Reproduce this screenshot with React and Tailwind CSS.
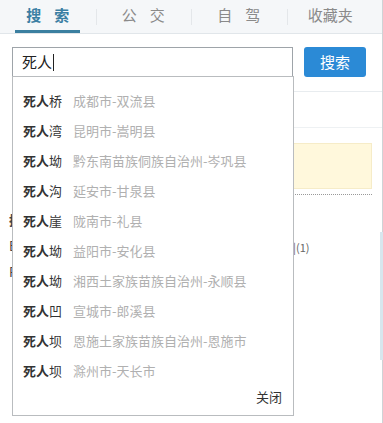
import { useState } from 'react'

const tabs = ['搜索', '公交', '自驾', '收藏夹']

const suggestions = [
  ['死人桥', '成都市-双流县'],
  ['死人湾', '昆明市-嵩明县'],
  ['死人坳', '黔东南苗族侗族自治州-岑巩县'],
  ['死人沟', '延安市-甘泉县'],
  ['死人崖', '陇南市-礼县'],
  ['死人坳', '益阳市-安化县'],
  ['死人坳', '湘西土家族苗族自治州-永顺县'],
  ['死人凹', '宣城市-郎溪县'],
  ['死人坝', '恩施土家族苗族自治州-恩施市'],
  ['死人坝', '滁州市-天长市'],
]

const query = '死人'

export default function App() {
  const [active] = useState(0)

  return (
    <div
      className="relative w-[383px] h-[423px] overflow-hidden bg-white"
      style={{ fontFamily: '"Noto Sans CJK SC", "Noto Sans", sans-serif' }}
    >
      <div className="border-r border-[#cfd3d6] h-full">
        {/* tab bar */}
        <div className="flex h-[34px] bg-[#f5f7f9] border-b border-[#e1e6ea]">
          {tabs.map((t, i) => (
            <div key={t} className="relative flex-1 flex items-center justify-center">
              {i > 0 && <span className="absolute left-0 top-[9px] h-[16px] w-px bg-[#e4e7ea]" />}
              {i === 3 ? (
                <span className="text-[15px] text-[#8a8a8a] -mt-[2px] -ml-[8px]">{t}</span>
              ) : (
                <span
                  className={
                    i === active
                      ? 'text-[15px] font-bold text-[#3b7fa3] tracking-[13px] -mr-[13px] -mt-[2px]'
                      : 'text-[15px] text-[#8a8a8a] tracking-[13px] -mr-[13px] -mt-[2px]'
                  }
                >
                  {t}
                </span>
              )}
              {i === active && (
                <span className="absolute bottom-0 left-[15px] w-[65px] h-[3px] bg-[#3b7fa0]" />
              )}
            </div>
          ))}
        </div>

        {/* search row */}
        <div className="flex items-center pl-[12px] pt-[13px]">
          <div className="w-[281px] h-[30px] border border-[#9ea4a9] bg-white flex items-center pl-[9px] text-[15px] text-[#222]">
            死人<span className="w-px h-[17px] bg-[#222] ml-px" />
          </div>
          <button className="ml-[11px] w-[62px] h-[30px] rounded-[3px] bg-[#2b8ad6] text-white text-[15px]">
            搜索
          </button>
        </div>

        {/* page content behind the dropdown */}
        <div className="flex">
          <div className="w-[293px] pt-[130px] pl-[9px] text-[13px] text-[#444] leading-[26px]">
            <div className="font-bold">搜</div>
            <div>E</div>
            <div>R</div>
          </div>
          <div className="flex-1 pt-[14px]">
            <div className="h-px bg-[#e8ecef]" />
            <div className="h-[36px] border-b border-[#eef1f3]" />
            <div className="mt-[15px] mr-[10px] h-[46px] bg-[#fff8dc] border border-[#f6ecc8]" />
            <div className="mt-[5px] mr-[10px] border-t border-dotted border-[#999]" />
            <div className="mt-[44px] text-[11px] text-[#666]">|(1)</div>
          </div>
        </div>
      </div>
      <div className="absolute right-0 top-[232px] w-[3px] h-[128px] bg-[#d8e6ee]" />

      {/* suggestion dropdown */}
      <div className="absolute left-[12px] top-[76px] w-[282px] h-[340px] bg-white border border-[#b9bcbf] pt-[9px]">
        {suggestions.map(([name, place], i) => (
          <div key={i} className="flex items-center h-[30px] pl-[10px] text-[13px]">
            <span className="text-[#333] w-[50px]">
              <b className="font-bold">{query}</b>
              {name.slice(query.length)}
            </span>
            <span className="text-[#b0b0b0]">{place}</span>
          </div>
        ))}
        <div className="flex justify-end pr-[11px] pt-[1px] text-[13px] text-[#333]">关闭</div>
      </div>
    </div>
  )
}
